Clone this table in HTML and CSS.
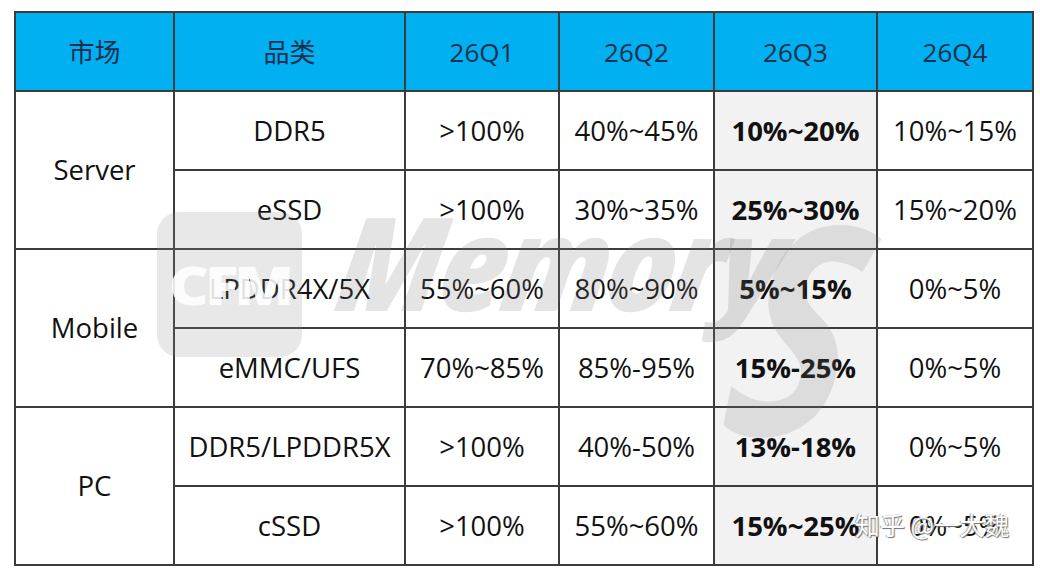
FILE: index.html
```html
<!DOCTYPE html>
<html lang="zh">
<head>
<meta charset="utf-8">
<title>存储价格涨幅预测</title>
<link rel="stylesheet" href="styles.css">
</head>
<body>
<div class="page">
  <table class="grid">
    <colgroup>
      <col class="c-market"><col class="c-cat"><col class="c-q1"><col class="c-q2"><col class="c-q3"><col class="c-q4">
    </colgroup>
    <thead>
      <tr class="head">
        <th>市场</th><th>品类</th><th>26Q1</th><th>26Q2</th><th>26Q3</th><th>26Q4</th>
      </tr>
    </thead>
    <tbody>
      <tr>
        <td rowspan="2" class="market">Server</td>
        <td>DDR5</td><td>&gt;100%</td><td>40%~45%</td><td class="hl">10%~20%</td><td>10%~15%</td>
      </tr>
      <tr>
        <td>eSSD</td><td>&gt;100%</td><td>30%~35%</td><td class="hl">25%~30%</td><td>15%~20%</td>
      </tr>
      <tr>
        <td rowspan="2" class="market">Mobile</td>
        <td>LPDDR4X/5X</td><td>55%~60%</td><td>80%~90%</td><td class="hl">5%~15%</td><td>0%~5%</td>
      </tr>
      <tr>
        <td>eMMC/UFS</td><td>70%~85%</td><td>85%-95%</td><td class="hl">15%-25%</td><td>0%~5%</td>
      </tr>
      <tr>
        <td rowspan="2" class="market">PC</td>
        <td>DDR5/LPDDR5X</td><td>&gt;100%</td><td>40%-50%</td><td class="hl">13%-18%</td><td>0%~5%</td>
      </tr>
      <tr>
        <td>cSSD</td><td>&gt;100%</td><td>55%~60%</td><td class="hl">15%~25%</td><td>0%~5%</td>
      </tr>
    </tbody>
  </table>

  <div class="wm" aria-hidden="true">
    <div class="wm-logo"><span>CFM</span></div>
    <div class="wm-word">Memory</div>
    <div class="wm-s">S</div>
  </div>
  <div class="credit">知乎 @一大魏</div>
</div>
</body>
</html>
```

FILE: styles.css
```css
html, body {
  margin: 0;
  padding: 0;
  background: #ffffff;
}

.page {
  position: relative;
  width: 1040px;
  height: 571px;
  overflow: hidden;
  padding: 11px 0 0 14px;
  box-sizing: border-box;
}

.grid {
  border-collapse: collapse;
  table-layout: fixed;
  width: 1018px;
  font-family: "Open Sans", "Noto Sans CJK SC", sans-serif;
  font-size: 27.5px;
  color: #111111;
}

.c-market { width: 159px; }
.c-cat { width: 231px; }
.c-q1 { width: 154px; }
.c-q2 { width: 155px; }
.c-q3 { width: 163px; }
.c-q4 { width: 156px; }

.grid th,
.grid td {
  border: 2px solid #3c3c3c;
  text-align: center;
  vertical-align: middle;
  padding: 0;
  height: 77px;
  line-height: 1;
  white-space: nowrap;
}

.head th {
  background: #00b0f0;
  color: #1b2f4e;
  font-weight: 400;
  font-size: 26px;
  font-family: "Open Sans", "Noto Sans CJK SC", sans-serif;
}

.grid td.hl {
  background: #f2f2f2;
  font-weight: 700;
}

.grid td.market {
  background: #ffffff;
}

.wm {
  position: absolute;
  left: 0;
  top: 0;
  width: 1040px;
  height: 571px;
  pointer-events: none;
}

.wm-logo {
  position: absolute;
  left: 157px;
  top: 212px;
  width: 145px;
  height: 145px;
  border-radius: 22px;
  background: rgba(140, 140, 140, 0.2);
  display: flex;
  align-items: center;
  justify-content: center;
}

.wm-logo span {
  font-family: "Open Sans", sans-serif;
  font-weight: 800;
  font-size: 62px;
  letter-spacing: -4px;
  color: rgba(255, 255, 255, 0.85);
  transform: scaleY(0.85);
}

.wm-word {
  position: absolute;
  left: 326px;
  top: 172px;
  font-family: "Open Sans", sans-serif;
  font-style: italic;
  font-weight: 800;
  font-size: 130px;
  letter-spacing: -5px;
  color: rgba(120, 120, 120, 0.2);
  transform: scaleX(0.9) skewX(-10deg);
  transform-origin: left bottom;
}

.wm-s {
  position: absolute;
  left: 768px;
  top: 178px;
  font-family: "Open Sans", sans-serif;
  font-style: italic;
  font-weight: 700;
  font-size: 290px;
  line-height: 1;
  color: rgba(120, 120, 120, 0.18);
  transform: scaleX(0.8) skewX(-14deg);
  transform-origin: left top;
}

.credit {
  position: absolute;
  left: 855px;
  top: 509px;
  font-family: "Noto Sans CJK SC", sans-serif;
  font-size: 25px;
  line-height: 1.2;
  color: #ffffff;
  text-shadow: 1px 1px 1px #6a6a6a, -1px 0 1px #9a9a9a;
  opacity: 0.95;
}
```
